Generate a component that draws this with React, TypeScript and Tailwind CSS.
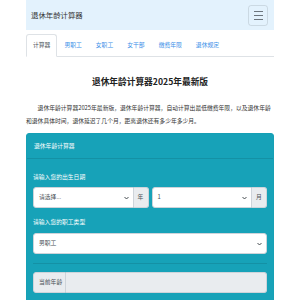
import React from 'react';

const tabs = ['计算器', '男职工', '女职工', '女干部', '缴费年限', '退休规定'];

function Chevron() {
  return (
    <svg width="5" height="4" viewBox="0 0 10 8" className="shrink-0">
      <path d="M1 2 L5 6 L9 2" fill="none" stroke="#343a40" strokeWidth="1.8" />
    </svg>
  );
}

function SelectBox({ value, unit }: { value: string; unit: string }) {
  return (
    <div className="flex flex-1 h-[21px]">
      <div className="flex flex-1 items-center justify-between bg-white rounded-l-[3px] border border-[#ced4da] pl-[5px] pr-[4px] text-[5.8px] text-[#495057]">
        <span>{value}</span>
        <Chevron />
      </div>
      <div className="flex items-center justify-center w-[15px] bg-[#e9ecef] border border-l-0 border-[#ced4da] rounded-r-[3px] text-[5.8px] text-[#495057]">
        {unit}
      </div>
    </div>
  );
}

export default function App() {
  return (
    <div
      className="w-[300px] h-[300px] overflow-hidden bg-white text-[#212529]"
      style={{ fontFamily: '"Noto Sans CJK SC", "Noto Sans", sans-serif' }}
    >
      <div className="mx-[26px]">
        {/* Navbar */}
        <nav className="h-[30px] bg-[#e3f2fd] flex items-center justify-between pl-[5px] pr-[6px]">
          <span className="text-[7.4px] text-[#333]">退休年龄计算器</span>
          <button className="w-[20px] h-[21px] border border-[#0000001a] rounded-[3px] flex flex-col items-center justify-center gap-[3px]">
            <span className="block w-[9px] h-[1px] bg-[#6c757d]" />
            <span className="block w-[9px] h-[1px] bg-[#6c757d]" />
            <span className="block w-[9px] h-[1px] bg-[#6c757d]" />
          </button>
        </nav>

        {/* Tabs */}
        <ul className="mt-[4px] flex h-[23px] border-b border-[#dee2e6]">
          {tabs.map((t, i) => (
            <li
              key={t}
              className={
                i === 0
                  ? 'px-[6px] flex items-center -mb-px bg-white border border-b-white border-[#dee2e6] rounded-t-[3px] text-[5.8px] text-[#495057]'
                  : 'px-[6px] flex items-center border border-transparent text-[5.8px] text-[#3b8fe8]'
              }
            >
              {t}
            </li>
          ))}
        </ul>

        {/* Heading */}
        <h1 className="mt-[19px] text-center text-[8.7px] font-bold leading-[12px] text-[#222]">
          退休年龄计算器2025年最新版
        </h1>
        <p className="mt-[13px] text-[5.8px] leading-[13px] indent-[11.6px] text-[#333]">
          退休年龄计算器2025年最新版，退休年龄计算器，自动计算出最低缴费年限，以及退休年龄和退休具体时间，退休延迟了几个月，距离退休还有多少年多少月。
        </p>

        {/* Card */}
        <div className="mt-[6px] bg-[#17a2b8] border border-[#16a0b5] rounded-[3px] text-white">
          <div className="h-[25px] flex items-center px-[7px] border-b border-[#0000001a] text-[5.8px]">
            退休年龄计算器
          </div>
          <div className="px-[6px] pt-[13px] pb-[10px]">
            <div className="h-[10px] leading-[10px] text-[5.8px]">请输入您的出生日期</div>
            <div className="mt-[5px] flex gap-[3px]">
              <SelectBox value="请选择..." unit="年" />
              <SelectBox value="1" unit="月" />
            </div>
            <div className="mt-[9px] h-[10px] leading-[10px] text-[5.8px]">请输入您的职工类型</div>
            <div className="mt-[6px] h-[21px] flex items-center justify-between bg-white rounded-[3px] border border-[#ced4da] pl-[5px] pr-[4px] text-[5.8px] text-[#495057]">
              <span>男职工</span>
              <Chevron />
            </div>
            <hr className="mt-[9px] border-t border-[#0000001a]" />
            <div className="mt-[8px] flex h-[21px]">
              <div className="flex items-center w-[33px] pl-[5px] bg-[#e9ecef] border border-[#ced4da] rounded-l-[3px] text-[5.8px] text-[#495057]">
                当前年龄
              </div>
              <div className="flex-1 bg-[#e9ecef] border border-l-0 border-[#ced4da] rounded-r-[3px]" />
            </div>
          </div>
        </div>
      </div>
    </div>
  );
}
